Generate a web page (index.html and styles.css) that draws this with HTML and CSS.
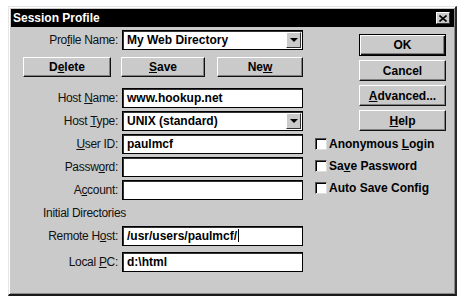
FILE: index.html
```html
<!DOCTYPE html>
<html lang="en">
<head>
    <meta charset="UTF-8">
    <title>Session Profile</title>
    <link rel="stylesheet" href="styles.css">
</head>
<body>
    <div class="dialog">
        <div class="titlebar">
            <span class="title">Session Profile</span>
            <span class="close">
                <svg width="8" height="7" viewBox="0 0 8 7"><path d="M0.5 0.5 L7.5 6.5 M7.5 0.5 L0.5 6.5" stroke="#000" stroke-width="1.6"/></svg>
            </span>
        </div>
        <div class="content">
            <div class="form">
                <div class="row">
                    <label>Pro<u>f</u>ile Name:</label>
                    <div class="field combo"><span>My Web Directory</span><span class="drop"><i></i></span></div>
                </div>
                <div class="btnrow">
                    <button class="btn delete">D<u>e</u>lete</button>
                    <button class="btn save"><u>S</u>ave</button>
                    <button class="btn new">Ne<u>w</u></button>
                </div>
                <div class="row host">
                    <label>Host <u>N</u>ame:</label>
                    <div class="field">www.hookup.net</div>
                </div>
                <div class="row">
                    <label>Host <u>T</u>ype:</label>
                    <div class="field combo"><span>UNIX (standard)</span><span class="drop"><i></i></span></div>
                </div>
                <div class="row">
                    <label><u>U</u>ser ID:</label>
                    <div class="field">paulmcf</div>
                </div>
                <div class="row">
                    <label>Passw<u>o</u>rd:</label>
                    <div class="field"></div>
                </div>
                <div class="row">
                    <label>A<u>c</u>count:</label>
                    <div class="field"></div>
                </div>
                <div class="section">Initial Directories</div>
                <div class="row">
                    <label>Remote H<u>o</u>st:</label>
                    <div class="field">/usr/users/paulmcf/<span class="caret"></span></div>
                </div>
                <div class="row local">
                    <label>Local <u>P</u>C:</label>
                    <div class="field">d:\html</div>
                </div>
            </div>
            <div class="side">
                <div class="buttons">
                    <button class="btn default">OK</button>
                    <button class="btn">Cancel</button>
                    <button class="btn"><u>A</u>dvanced...</button>
                    <button class="btn"><u>H</u>elp</button>
                </div>
                <div class="checks">
                    <div class="check"><span class="box"></span><span>Anonymous <u>L</u>ogin</span></div>
                    <div class="check"><span class="box"></span><span>Sa<u>v</u>e Password</span></div>
                    <div class="check"><span class="box"></span><span>Auto Save Config</span></div>
                </div>
            </div>
        </div>
    </div>
</body>
</html>
```

FILE: styles.css
```css
body {
    margin: 0;
    background-color: #fff;
    font-family: 'Liberation Sans', Arial, sans-serif;
    color: #000;
}
.dialog {
    margin: 6px 0 0 8px;
    width: 449px;
    height: 290px;
    box-sizing: border-box;
    padding: 2px 1px 2px 2px;
    background-color: #cacaca;
    border-top: 1px solid #e6e6e6;
    border-left: 1px solid #e6e6e6;
    border-right: 2px solid #2a2a2a;
    border-bottom: 2px solid #1a1a1a;
    box-shadow: inset 1px 1px 0 #fff, inset -1px -1px 0 #8a8a8a;
}
.titlebar {
    height: 18px;
    background-color: #000;
    display: flex;
    align-items: center;
    justify-content: space-between;
    padding: 0 4px 0 2px;
}
.title {
    color: #fff;
    font-weight: bold;
    font-size: 12px;
}
.close {
    width: 14px;
    height: 12px;
    box-sizing: border-box;
    background-color: #cacaca;
    border-top: 1px solid #fff;
    border-left: 1px solid #fff;
    border-right: 1px solid #333;
    border-bottom: 1px solid #333;
    display: flex;
    align-items: center;
    justify-content: center;
}
.content {
    display: flex;
    padding-top: 3px;
}
.form {
    width: 292px;
}
.row {
    display: flex;
    align-items: center;
    height: 20px;
    margin-top: 3px;
}
.row:first-child {
    margin-top: 0;
}
.row label, .section {
    font-size: 12px;
    letter-spacing: -0.3px;
    color: #111;
}
.row label {
    width: 107px;
    text-align: right;
}
.field {
    margin-left: 4px;
    width: 181px;
    height: 20px;
    box-sizing: border-box;
    background-color: #fff;
    border: 1px solid #000;
    box-shadow: inset 1px 1px 0 #333;
    font-size: 12px;
    font-weight: bold;
    line-height: 18px;
    padding-left: 4px;
    white-space: nowrap;
}
.combo {
    display: flex;
    justify-content: space-between;
    padding-right: 1px;
}
.drop {
    width: 15px;
    height: 16px;
    margin-top: 1px;
    box-sizing: border-box;
    background-color: #cacaca;
    border-top: 1px solid #fff;
    border-left: 1px solid #fff;
    border-right: 1px solid #333;
    border-bottom: 1px solid #333;
    display: flex;
    align-items: center;
    justify-content: center;
}
.drop i {
    width: 0;
    height: 0;
    border-left: 4px solid transparent;
    border-right: 4px solid transparent;
    border-top: 4px solid #000;
}
.caret {
    display: inline-block;
    width: 1px;
    height: 13px;
    background-color: #000;
    vertical-align: -2px;
    margin-left: 1px;
}
.btnrow {
    display: flex;
    margin-top: 7px;
    padding-left: 12px;
}
.btn {
    height: 20px;
    box-sizing: border-box;
    background-color: #cacaca;
    border-top: 1px solid #fff;
    border-left: 1px solid #fff;
    border-right: 1px solid #111;
    border-bottom: 1px solid #111;
    box-shadow: inset -1px -1px 0 #808080;
    font-family: 'Liberation Sans', Arial, sans-serif;
    font-size: 12px;
    font-weight: bold;
    color: #000;
    padding: 0;
}
.delete {
    width: 88px;
}
.save {
    width: 84px;
    margin-left: 10px;
}
.new {
    width: 86px;
    margin-left: 12px;
}
.host {
    margin-top: 11px;
}
.section {
    height: 20px;
    line-height: 20px;
    margin-top: 3px;
    padding-left: 32px;
}
.local {
    margin-top: 6px;
}
.side {
    margin-left: 12px;
    width: 132px;
}
.buttons {
    display: flex;
    flex-direction: column;
    gap: 4px;
    padding-left: 44px;
    padding-top: 4px;
}
.buttons .btn {
    width: 87px;
    height: 21px;
}
.buttons .default {
    height: 22px;
    border: 1px solid #000;
    box-shadow: inset 1px 1px 0 #fff, inset -1px -1px 0 #111, inset -2px -2px 0 #808080;
}
.checks {
    margin-top: 2px;
}
.check {
    display: flex;
    align-items: center;
    height: 22px;
    font-size: 12px;
    font-weight: bold;
}
.box {
    width: 12px;
    height: 12px;
    box-sizing: border-box;
    background-color: #fff;
    border-top: 1px solid #555;
    border-left: 1px solid #555;
    border-right: 1px solid #ddd;
    border-bottom: 1px solid #ddd;
    box-shadow: inset 1px 1px 0 #000;
    margin-right: 2px;
}
```
